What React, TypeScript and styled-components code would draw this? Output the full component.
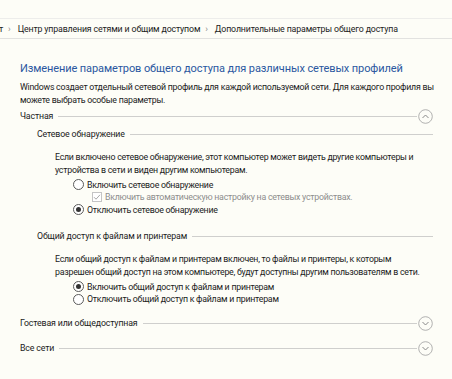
import React from "react";
import styled, { createGlobalStyle } from "styled-components";

const GlobalStyle = createGlobalStyle`
  html, body {
    margin: 0;
    padding: 0;
    background: #fdfdf7;
  }
  body {
    font-family: Roboto, "Noto Sans", sans-serif;
    font-size: 8.8px;
    letter-spacing: -0.15px;
    color: #1b1b1b;
  }
`;

const Page = styled.div`
  width: 452px;
  height: 379px;
  overflow: hidden;
  background: #fdfdf7;
  padding-top: 18px;
  box-sizing: border-box;
`;

const Breadcrumb = styled.div`
  height: 21px;
  border-top: 1px solid #ededeb;
  border-bottom: 1px solid #e2e2e0;
  display: flex;
  align-items: center;
  white-space: nowrap;
  margin-left: -1px;
  box-sizing: border-box;
`;

const Crumb = styled.span`
  color: #1b1b1b;
`;

const Sep = styled.span`
  color: #8a8a8a;
  font-size: 9px;
  margin: 0 7px 0 5px;
`;

const Content = styled.div`
  padding: 21px 19px 0 20px;
`;

const Title = styled.h1`
  margin: 0;
  font-size: 11px;
  letter-spacing: -0.1px;
  font-weight: 400;
  color: #2a57a0;
  line-height: 18px;
  white-space: nowrap;
`;

const Intro = styled.p`
  margin: 3px 0 0;
  line-height: 13px;
  letter-spacing: -0.25px;
  white-space: nowrap;
`;

const SectionHead = styled.div<{ $indent?: number; $top: number }>`
  display: flex;
  align-items: center;
  margin-left: ${(p) => p.$indent ?? 0}px;
  margin-top: ${(p) => p.$top}px;
  height: 16px;
`;

const HeadLabel = styled.span`
  white-space: nowrap;
  margin-right: 5px;
`;

const Rule = styled.div`
  flex: 1;
  border-top: 1px solid #cfcfcd;
`;

const ToggleIcon = styled.svg`
  width: 15px;
  height: 15px;
  margin-left: 1px;
  flex: none;
`;

const Para = styled.p`
  margin: 8.5px 0 0 35px;
  line-height: 13px;
  letter-spacing: -0.25px;
  white-space: nowrap;
`;

const Options = styled.div`
  margin: 2px 0 0 53px;
  display: flex;
  flex-direction: column;
  letter-spacing: -0.25px;
`;

const Option = styled.div<{ $disabled?: boolean; $indent?: number }>`
  display: flex;
  align-items: center;
  height: 12.5px;
  margin-left: ${(p) => p.$indent ?? 0}px;
  color: ${(p) => (p.$disabled ? "#8d8d8d" : "#1b1b1b")};
  white-space: nowrap;
`;

const RadioMark = styled.span<{ $checked?: boolean }>`
  width: 9px;
  height: 9px;
  border: 1px solid #5a5a5a;
  border-radius: 50%;
  margin-right: 3px;
  display: flex;
  align-items: center;
  justify-content: center;
  background: #fff;
  &::after {
    content: "";
    width: 5px;
    height: 5px;
    border-radius: 50%;
    background: ${(p) => (p.$checked ? "#333" : "transparent")};
  }
`;

const CheckMark = styled.svg`
  width: 10px;
  height: 10px;
  margin-right: 3px;
`;

function Toggle({ open }: { open?: boolean }) {
  return (
    <ToggleIcon viewBox="0 0 15 15">
      <circle cx="7.5" cy="7.5" r="6.8" fill="none" stroke="#a8a8a8" strokeWidth="0.9" />
      {open ? (
        <path d="M4.5 9 L7.5 6 L10.5 9" fill="none" stroke="#8a8a8a" strokeWidth="1" />
      ) : (
        <path d="M4.5 6 L7.5 9 L10.5 6" fill="none" stroke="#8a8a8a" strokeWidth="1" />
      )}
    </ToggleIcon>
  );
}

function Radio({ label, checked }: { label: string; checked?: boolean }) {
  return (
    <Option>
      <RadioMark $checked={checked} />
      {label}
    </Option>
  );
}

export default function App() {
  return (
    <Page>
      <GlobalStyle />
      <Breadcrumb>
        <Crumb>т</Crumb>
        <Sep>›</Sep>
        <Crumb>Центр управления сетями и общим доступом</Crumb>
        <Sep>›</Sep>
        <Crumb>Дополнительные параметры общего доступа</Crumb>
      </Breadcrumb>
      <Content>
        <Title>Изменение параметров общего доступа для различных сетевых профилей</Title>
        <Intro>
          Windows создает отдельный сетевой профиль для каждой используемой сети. Для каждого профиля вы
          <br />
          можете выбрать особые параметры.
        </Intro>

        <SectionHead $top={1}>
          <HeadLabel>Частная</HeadLabel>
          <Rule />
          <Toggle open />
        </SectionHead>

        <SectionHead $indent={17} $top={2}>
          <HeadLabel>Сетевое обнаружение</HeadLabel>
          <Rule />
        </SectionHead>

        <Para>
          Если включено сетевое обнаружение, этот компьютер может видеть другие компьютеры и
          <br />
          устройства в сети и виден другим компьютерам.
        </Para>
        <Options>
          <Radio label="Включить сетевое обнаружение" />
          <Option $disabled $indent={19}>
            <CheckMark viewBox="0 0 10 10">
              <rect x="0.5" y="0.5" width="9" height="9" fill="#fff" stroke="#c4c4c4" />
              <path d="M2 5.2 L4 7.2 L8 2.8" fill="none" stroke="#a9a9a9" strokeWidth="1" />
            </CheckMark>
            Включить автоматическую настройку на сетевых устройствах.
          </Option>
          <Radio label="Отключить сетевое обнаружение" checked />
        </Options>

        <SectionHead $indent={17} $top={12}>
          <HeadLabel>Общий доступ к файлам и принтерам</HeadLabel>
          <Rule />
        </SectionHead>

        <Para>
          Если общий доступ к файлам и принтерам включен, то файлы и принтеры, к которым
          <br />
          разрешен общий доступ на этом компьютере, будут доступны другим пользователям в сети.
        </Para>
        <Options>
          <Radio label="Включить общий доступ к файлам и принтерам" checked />
          <Radio label="Отключить общий доступ к файлам и принтерам" />
        </Options>

        <SectionHead $top={9.5}>
          <HeadLabel>Гостевая или общедоступная</HeadLabel>
          <Rule />
          <Toggle />
        </SectionHead>

        <SectionHead $top={9}>
          <HeadLabel>Все сети</HeadLabel>
          <Rule />
          <Toggle />
        </SectionHead>
      </Content>
    </Page>
  );
}
